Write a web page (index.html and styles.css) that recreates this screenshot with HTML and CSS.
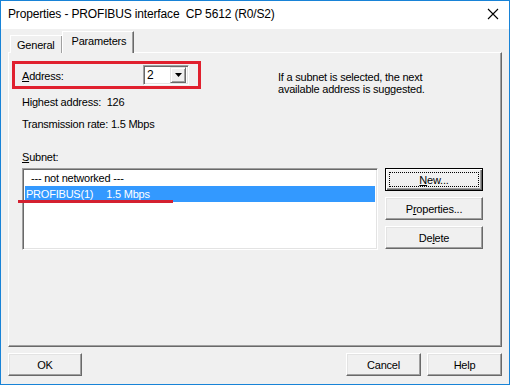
FILE: index.html
```html
<!DOCTYPE html>
<html>
<head>
<meta charset="utf-8">
<link rel="stylesheet" href="styles.css">
</head>
<body>
<div class="window">
  <div class="titlebar">
    <span class="title">Properties - PROFIBUS interface&nbsp; CP 5612 (R0/S2)</span>
    <span class="close"><svg width="12" height="12" viewBox="0 0 12 12"><path d="M1 1 L11 11 M11 1 L1 11" stroke="#000" stroke-width="1.1" fill="none"/></svg></span>
  </div>
  <div class="client">
    <div class="tabs">
      <div class="tab">General</div>
      <div class="tab active">Parameters</div>
    </div>
    <div class="panel">
      <div class="top-row">
        <div class="addr-box">
          <span class="addr-label"><u>A</u>ddress:</span>
          <div class="combo">
            <span class="combo-value">2</span>
            <span class="combo-btn"><svg width="7" height="4" viewBox="0 0 7 4"><path d="M0 0 H7 L3.5 4 Z" fill="#000"/></svg></span>
          </div>
        </div>
        <div class="hint">If a subnet is selected, the next<br>available address is suggested.</div>
      </div>
      <div class="info first">Highest address:&nbsp; 126</div>
      <div class="info second">Transmission rate: 1.5 Mbps</div>
      <div class="subnet-label"><u>S</u>ubnet:</div>
      <div class="subnet-row">
        <div class="list-wrap">
          <div class="listbox">
            <div class="item plain">--- not networked ---</div>
            <div class="item sel">PROFIBUS(1)<span class="rate">1.5 Mbps</span></div>
          </div>
          <div class="underline"></div>
        </div>
        <div class="side-buttons">
          <div class="btn default"><u>N</u>ew...</div>
          <div class="btn">P<u>r</u>operties...</div>
          <div class="btn">De<u>l</u>ete</div>
        </div>
      </div>
    </div>
    <div class="footer">
      <div class="btn foot ok">OK</div>
      <div class="right-group">
        <div class="btn foot">Cancel</div>
        <div class="btn foot">Help</div>
      </div>
    </div>
  </div>
</div>
</body>
</html>
```
FILE: styles.css
```css
* { box-sizing: border-box; }
html, body { margin: 0; padding: 0; background: #f0f0f0; }
body {
  font-family: "Liberation Sans", Arial, sans-serif;
  font-size: 11px;
  letter-spacing: -0.22px;
  color: #000;
}
.window {
  width: 510px;
  height: 385px;
  border: 1px solid #1883d7;
  background: #f0f0f0;
  display: flex;
  flex-direction: column;
}
.titlebar {
  height: 28px;
  background: #fff;
  display: flex;
  align-items: center;
  justify-content: space-between;
  padding: 0 8px 2px 7px;
  flex: none;
}
.title {
  font-family: "Liberation Sans", Arial, sans-serif;
  font-size: 12px;
  letter-spacing: -0.15px;
  color: #000;
}
.close { display: flex; margin-right: 2px; }
.client {
  flex: 1;
  display: flex;
  flex-direction: column;
  padding: 0 7px;
}
.tabs {
  display: flex;
  align-items: flex-end;
  padding: 3px 0 0 2px;
  height: 24px;
  position: relative;
  z-index: 2;
  margin-bottom: -1px;
}
.tab {
  height: 18px;
  padding: 1px 7px 0 6px;
  display: flex;
  align-items: center;
  border-top: 1px solid #fff;
  border-left: 1px solid #fff;
  border-right: 1px solid #696969;
  box-shadow: inset -1px 0 #a0a0a0;
  background: #f0f0f0;
}
.tab.active {
  height: 22px;
  padding: 0 7px 4px 9px;
  margin-left: -1px;
}
.panel {
  flex: 1;
  border-top: 1px solid #fff;
  border-left: 1px solid #fff;
  border-right: 1px solid #696969;
  border-bottom: 1px solid #696969;
  box-shadow: inset -1px -1px #a0a0a0;
  display: flex;
  flex-direction: column;
  padding: 0 0 0 3px;
}
.top-row {
  display: flex;
  align-items: flex-start;
  margin-top: 8px;
  height: 28px;
}
.addr-box {
  width: 189px;
  height: 28px;
  border: 3px solid #e0202e;
  display: flex;
  align-items: center;
  justify-content: space-between;
  padding: 0 9px 0 7px;
}
.addr-label { padding-top: 1px; }
.combo {
  width: 46px;
  height: 20px;
  background: #fff;
  border-top: 1px solid #a0a0a0;
  border-left: 1px solid #a0a0a0;
  border-right: 1px solid #fff;
  border-bottom: 1px solid #fff;
  box-shadow: inset 1px 1px #696969, inset -1px -1px #e3e3e3;
  display: flex;
  align-items: center;
  justify-content: space-between;
  padding: 2px;
}
.combo-value { padding-left: 1px; font-size: 12px; }
.combo-btn {
  width: 16px;
  height: 16px;
  background: #f0f0f0;
  border-top: 1px solid #e3e3e3;
  border-left: 1px solid #e3e3e3;
  border-right: 1px solid #696969;
  border-bottom: 1px solid #696969;
  box-shadow: inset 1px 1px #fff, inset -1px -1px #a0a0a0;
  display: flex;
  align-items: center;
  justify-content: center;
}
.hint {
  margin-left: 77px;
  margin-top: 10px;
  line-height: 12px;
  white-space: nowrap;
}
.info { line-height: 14px; padding-left: 10px; }
.info.first { margin-top: 6px; }
.info.second { margin-top: 8px; }
.subnet-label { line-height: 14px; padding-left: 10px; margin-top: 19px; }
.subnet-row {
  display: flex;
  margin-top: 4px;
  padding-left: 10px;
}
.list-wrap { position: relative; }
.listbox {
  width: 356px;
  height: 82px;
  background: #fff;
  border-top: 1px solid #a0a0a0;
  border-left: 1px solid #a0a0a0;
  border-right: 1px solid #fff;
  border-bottom: 1px solid #fff;
  box-shadow: inset 1px 1px #696969, inset -1px -1px #e3e3e3;
  padding: 2px;
}
.item {
  height: 15px;
  line-height: 15px;
  white-space: nowrap;
}
.item.plain { padding-left: 6px; }
.item.sel {
  background: #3399ff;
  color: #fff;
  padding-left: 1px;
  height: 16px;
  line-height: 16px;
}
.rate { margin-left: 13px; }
.underline {
  position: absolute;
  left: -4px;
  top: 32px;
  width: 155px;
  height: 3px;
  background: #d42030;
}
.side-buttons {
  display: flex;
  flex-direction: column;
  gap: 6px;
  margin-left: 7px;
}
.btn {
  width: 98px;
  height: 23px;
  display: flex;
  align-items: center;
  justify-content: center;
  background: #f0f0f0;
  border-top: 1px solid #fff;
  border-left: 1px solid #fff;
  border-right: 1px solid #696969;
  border-bottom: 1px solid #696969;
  box-shadow: inset -1px -1px #a0a0a0, inset 1px 1px #e3e3e3;
}
.btn.default {
  border: 1px solid #000;
  box-shadow: inset 1px 1px #fff, inset -1px -1px #696969, inset -2px -2px #a0a0a0;
  outline: 1px dotted #000;
  outline-offset: -5px;
}
.footer {
  flex: none;
  display: flex;
  justify-content: space-between;
  padding: 6px 0 8px 0;
}
.right-group { display: flex; gap: 6px; }
.btn.foot { width: 75px; }
.btn.foot.ok { width: 74px; }
u { text-decoration: underline; text-underline-offset: 1px; }
```
